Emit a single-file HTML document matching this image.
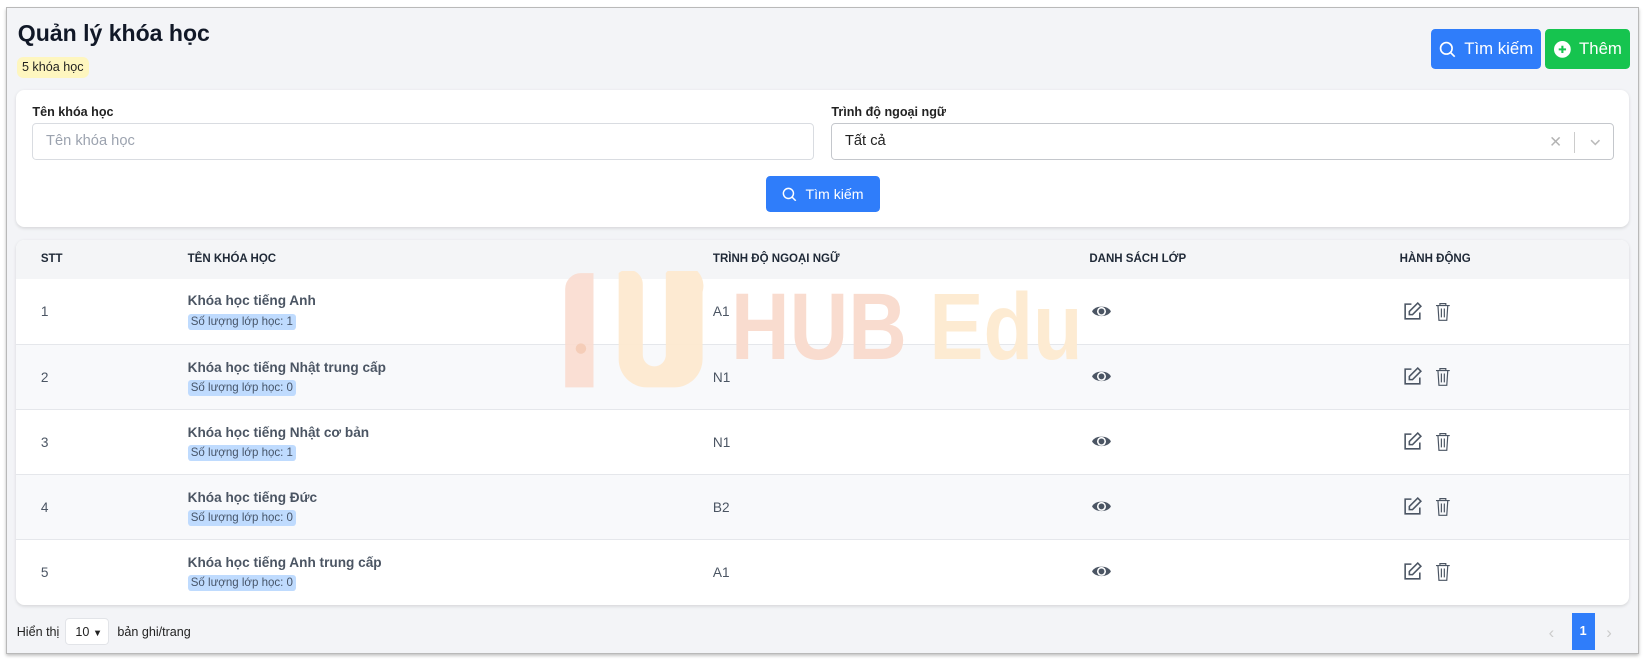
<!DOCTYPE html>
<html><head><meta charset="utf-8"><style>
html{zoom:1.0485}
body{margin:0;width:1568px;height:628px;background:#fff;font-family:"Liberation Sans",Arial,sans-serif;overflow:hidden;position:relative}
.frame{position:absolute;left:6px;top:7px;width:1555px;height:615px;background:#f3f4f7;border:1px solid #b9b9b9;box-shadow:0 2px 3px rgba(0,0,0,.25)}
.abs{position:absolute}
h1{position:absolute;left:10px;top:11px;margin:0;font-size:22px;font-weight:bold;color:#111827}
.badge{left:9px;top:46px;height:20px;padding:0 5px;background:#fef6bf;border-radius:6px;font-size:12px;line-height:20px;color:#222}
.btn{color:#fff;border-radius:4px;font-size:16px;display:flex;align-items:center;justify-content:center;gap:8px}
.card{background:#fff;border-radius:8px;box-shadow:0 1px 3px rgba(0,0,0,.12)}
.lbl{font-size:12px;font-weight:bold;color:#222}
.inp{border:1px solid #d9dce1;border-radius:4px;background:#fff;font-size:14px;display:flex;align-items:center;padding-left:12px;box-sizing:border-box}
.th{font-size:11px;font-weight:bold;color:#1f2937;top:12px}
.row{position:absolute;left:0;width:1539px;height:62px;border-top:1px solid #e5e7eb}
.row .c{position:absolute;font-size:13px;color:#4b5563}
.nm{font-weight:bold;color:#4b5563;font-size:13px}
.tag{display:inline-block;background:#bfdbfe;color:#475569;font-size:11px;padding:2px 3px;border-radius:3px;margin-top:5px}
</style></head><body>
<div class="frame">
<h1>Quản lý khóa học</h1>
<div class="abs badge">5 khóa học</div>
<div class="abs btn" style="left:1358px;top:20px;width:105px;height:38px;background:#2f7dfa"><svg width="16" height="16" viewBox="0 0 16 16" fill="none" stroke="#fff" stroke-width="1.6"><circle cx="7" cy="7" r="5.5"/><path d="M11 11l4 4"/></svg>Tìm kiếm</div>
<div class="abs btn" style="left:1467px;top:20px;width:81px;height:38px;background:#16c44f"><svg width="16" height="16" viewBox="0 0 16 16"><circle cx="8" cy="8" r="8" fill="#fff"/><path d="M8 4.5v7M4.5 8h7" stroke="#16c44f" stroke-width="2"/></svg>Thêm</div>

<div class="abs card" style="left:8px;top:78px;width:1539px;height:131px">
 <div class="abs lbl" style="left:16px;top:14px">Tên khóa học</div>
 <div class="abs inp" style="left:16px;top:31px;width:745px;height:36px;color:#9ca3af">Tên khóa học</div>
 <div class="abs lbl" style="left:778px;top:14px">Trình độ ngoại ngữ</div>
 <div class="abs inp" style="left:778px;top:31px;width:746px;height:36px;color:#222;border-color:#c4c7cc">Tất cả
  <span class="abs" style="right:48px;top:8px;color:#b3b3b3;font-size:15px">✕</span>
  <span class="abs" style="right:36px;top:8px;width:1px;height:20px;background:#ccc"></span>
  <svg class="abs" style="right:10px;top:12px" width="12" height="12" viewBox="0 0 12 12" fill="none" stroke="#bbb" stroke-width="1.5"><path d="M2 4l4 4 4-4"/></svg>
 </div>
 <div class="abs btn" style="left:716px;top:82px;width:108px;height:34px;background:#2f7dfa;font-size:13.5px"><svg width="14" height="14" viewBox="0 0 16 16" fill="none" stroke="#fff" stroke-width="1.6"><circle cx="7" cy="7" r="5.5"/><path d="M11 11l4 4"/></svg>Tìm kiếm</div>
</div>

<div class="abs card" style="left:8px;top:221px;width:1539px;height:348px;overflow:hidden">
 <div class="abs" style="left:0;top:0;width:1539px;height:37px;background:#f4f5f7"></div>
 <div class="abs th" style="left:24px">STT</div>
 <div class="abs th" style="left:164px">TÊN KHÓA HỌC</div>
 <div class="abs th" style="left:665px">TRÌNH ĐỘ NGOẠI NGỮ</div>
 <div class="abs th" style="left:1024px">DANH SÁCH LỚP</div>
 <div class="abs th" style="left:1320px">HÀNH ĐỘNG</div>

 <div class="row" style="top:37px;border-top:none"><span class="c" style="left:24px;top:24px">1</span><div class="c" style="left:164px;top:14px"><div class="nm">Khóa học tiếng Anh</div><span class="tag">Số lượng lớp học: 1</span></div><span class="c" style="left:665px;top:24px">A1</span></div>
 <div class="row" style="top:99px;background:#f8f9fb"><span class="c" style="left:24px;top:24px">2</span><div class="c" style="left:164px;top:14px"><div class="nm">Khóa học tiếng Nhật trung cấp</div><span class="tag">Số lượng lớp học: 0</span></div><span class="c" style="left:665px;top:24px">N1</span></div>
 <div class="row" style="top:161px"><span class="c" style="left:24px;top:24px">3</span><div class="c" style="left:164px;top:14px"><div class="nm">Khóa học tiếng Nhật cơ bản</div><span class="tag">Số lượng lớp học: 1</span></div><span class="c" style="left:665px;top:24px">N1</span></div>
 <div class="row" style="top:223px;background:#f8f9fb"><span class="c" style="left:24px;top:24px">4</span><div class="c" style="left:164px;top:14px"><div class="nm">Khóa học tiếng Đức</div><span class="tag">Số lượng lớp học: 0</span></div><span class="c" style="left:665px;top:24px">B2</span></div>
 <div class="row" style="top:285px"><span class="c" style="left:24px;top:24px">5</span><div class="c" style="left:164px;top:14px"><div class="nm">Khóa học tiếng Anh trung cấp</div><span class="tag">Số lượng lớp học: 0</span></div><span class="c" style="left:665px;top:24px">A1</span></div>

 <!-- watermark -->
 <svg class="abs" style="left:520px;top:30px" width="140" height="115" viewBox="0 0 140 115">
  <path d="M19 2H31V111H4V17A15 15 0 0 1 19 2Z" fill="#f9dccf" opacity=".9"/>
  <circle cx="19" cy="74" r="5" fill="#f5cdb8"/>
  <path d="M55 2A14 14 0 0 1 78 13V80A11 11 0 0 0 100 80V2A20 20 0 0 1 135 20V84A27 27 0 0 1 108 111H82A27 27 0 0 1 55 84Z" fill="#fde9d0" opacity=".95"/>
 </svg>
 <div class="abs" style="left:682px;top:33px;font-size:90px;font-weight:bold;line-height:100px;white-space:nowrap;transform:scaleX(.86);transform-origin:0 0"><span style="color:#f9dccf">HUB</span> <span style="color:#fdebd2">Edu</span></div>

 <!-- icons -->
 <svg class="abs" style="left:1026px;top:60px" width="20" height="16" viewBox="0 0 20 16"><path d="M1 8C4 2 16 2 19 8C16 14 4 14 1 8Z" fill="#4b5563"/><circle cx="10" cy="8" r="4.3" fill="#fff"/><circle cx="10" cy="8" r="2.8" fill="#4b5563"/></svg>
 <svg class="abs" style="left:1026px;top:122px" width="20" height="16" viewBox="0 0 20 16"><path d="M1 8C4 2 16 2 19 8C16 14 4 14 1 8Z" fill="#4b5563"/><circle cx="10" cy="8" r="4.3" fill="#fff"/><circle cx="10" cy="8" r="2.8" fill="#4b5563"/></svg>
 <svg class="abs" style="left:1026px;top:184px" width="20" height="16" viewBox="0 0 20 16"><path d="M1 8C4 2 16 2 19 8C16 14 4 14 1 8Z" fill="#4b5563"/><circle cx="10" cy="8" r="4.3" fill="#fff"/><circle cx="10" cy="8" r="2.8" fill="#4b5563"/></svg>
 <svg class="abs" style="left:1026px;top:246px" width="20" height="16" viewBox="0 0 20 16"><path d="M1 8C4 2 16 2 19 8C16 14 4 14 1 8Z" fill="#4b5563"/><circle cx="10" cy="8" r="4.3" fill="#fff"/><circle cx="10" cy="8" r="2.8" fill="#4b5563"/></svg>
 <svg class="abs" style="left:1026px;top:308px" width="20" height="16" viewBox="0 0 20 16"><path d="M1 8C4 2 16 2 19 8C16 14 4 14 1 8Z" fill="#4b5563"/><circle cx="10" cy="8" r="4.3" fill="#fff"/><circle cx="10" cy="8" r="2.8" fill="#4b5563"/></svg>

 <div class="abs" style="left:1322px;top:58px"><svg width="20" height="20" viewBox="0 0 20 20" fill="none" stroke="#4b5563" stroke-width="1.5"><path d="M9 3H3v14h14v-6"/><path d="M15 2l3 3-8 8H7v-3z"/></svg><svg style="margin-left:12px" width="15" height="20" viewBox="0 0 16 20" fill="none" stroke="#4b5563" stroke-width="1.2"><path d="M1 4h14M5 4V2h6v2M3 4l1 15h8l1-15M6.5 7v9M9.5 7v9"/></svg></div>
 <div class="abs" style="left:1322px;top:120px"><svg width="20" height="20" viewBox="0 0 20 20" fill="none" stroke="#4b5563" stroke-width="1.5"><path d="M9 3H3v14h14v-6"/><path d="M15 2l3 3-8 8H7v-3z"/></svg><svg style="margin-left:12px" width="15" height="20" viewBox="0 0 16 20" fill="none" stroke="#4b5563" stroke-width="1.2"><path d="M1 4h14M5 4V2h6v2M3 4l1 15h8l1-15M6.5 7v9M9.5 7v9"/></svg></div>
 <div class="abs" style="left:1322px;top:182px"><svg width="20" height="20" viewBox="0 0 20 20" fill="none" stroke="#4b5563" stroke-width="1.5"><path d="M9 3H3v14h14v-6"/><path d="M15 2l3 3-8 8H7v-3z"/></svg><svg style="margin-left:12px" width="15" height="20" viewBox="0 0 16 20" fill="none" stroke="#4b5563" stroke-width="1.2"><path d="M1 4h14M5 4V2h6v2M3 4l1 15h8l1-15M6.5 7v9M9.5 7v9"/></svg></div>
 <div class="abs" style="left:1322px;top:244px"><svg width="20" height="20" viewBox="0 0 20 20" fill="none" stroke="#4b5563" stroke-width="1.5"><path d="M9 3H3v14h14v-6"/><path d="M15 2l3 3-8 8H7v-3z"/></svg><svg style="margin-left:12px" width="15" height="20" viewBox="0 0 16 20" fill="none" stroke="#4b5563" stroke-width="1.2"><path d="M1 4h14M5 4V2h6v2M3 4l1 15h8l1-15M6.5 7v9M9.5 7v9"/></svg></div>
 <div class="abs" style="left:1322px;top:306px"><svg width="20" height="20" viewBox="0 0 20 20" fill="none" stroke="#4b5563" stroke-width="1.5"><path d="M9 3H3v14h14v-6"/><path d="M15 2l3 3-8 8H7v-3z"/></svg><svg style="margin-left:12px" width="15" height="20" viewBox="0 0 16 20" fill="none" stroke="#4b5563" stroke-width="1.2"><path d="M1 4h14M5 4V2h6v2M3 4l1 15h8l1-15M6.5 7v9M9.5 7v9"/></svg></div>
</div>

<div class="abs" style="left:9px;top:588px;font-size:12px;color:#222">Hiển thị</div>
<div class="abs" style="left:55px;top:581px;width:42px;height:26px;border:1px solid #e2e4e8;border-radius:4px;background:#fff;font-size:12px;line-height:26px;box-sizing:border-box;padding-left:9px;color:#222">10 <span style="font-size:9px">▼</span></div>
<div class="abs" style="left:105px;top:588px;font-size:12px;color:#222">bản ghi/trang</div>
<div class="abs" style="left:1470px;top:586px;color:#ccc;font-size:16px">‹</div>
<div class="abs" style="left:1492px;top:577px;width:22px;height:35px;background:#2f7dfa;color:#fff;font-size:12px;font-weight:bold;text-align:center;line-height:35px">1</div>
<div class="abs" style="left:1525px;top:586px;color:#ccc;font-size:16px">›</div>
</div>
</body></html>
